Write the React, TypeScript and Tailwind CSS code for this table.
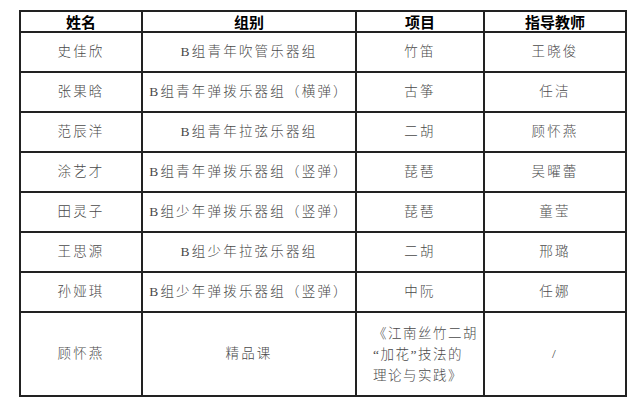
import React from 'react';

type Row = { name: string; group: string; item: React.ReactNode; teacher: string };

const rows: Row[] = [
  { name: '史佳欣', group: 'B组青年吹管乐器组', item: '竹笛', teacher: '王晓俊' },
  { name: '张果晗', group: 'B组青年弹拨乐器组（横弹）', item: '古筝', teacher: '任洁' },
  { name: '范辰洋', group: 'B组青年拉弦乐器组', item: '二胡', teacher: '顾怀燕' },
  { name: '涂艺才', group: 'B组青年弹拨乐器组（竖弹）', item: '琵琶', teacher: '吴曜蕾' },
  { name: '田灵子', group: 'B组少年弹拨乐器组（竖弹）', item: '琵琶', teacher: '童莹' },
  { name: '王思源', group: 'B组少年拉弦乐器组', item: '二胡', teacher: '邢璐' },
  { name: '孙娅琪', group: 'B组少年弹拨乐器组（竖弹）', item: '中阮', teacher: '任娜' },
];

const bodyFont = "font-['Liberation_Serif','Noto_Sans_CJK_SC',serif]";
const headFont = "font-['Noto_Sans_CJK_SC',sans-serif]";

export default function App() {
  return (
    <div className="w-[639px] h-[419px] bg-white pt-[10px] pl-[19px]">
      <table className="table-fixed border-collapse border-2 border-[#222] w-[606px]">
        <colgroup>
          <col className="w-[122px]" />
          <col className="w-[214px]" />
          <col className="w-[128px]" />
          <col className="w-[142px]" />
        </colgroup>
        <thead>
          <tr className="h-[21px]">
            {['姓名', '组别', '项目', '指导教师'].map((h) => (
              <th
                key={h}
                className={`${headFont} border-2 border-[#222] text-[15px] leading-[17px] font-bold text-black text-center p-0`}
              >
                {h}
              </th>
            ))}
          </tr>
        </thead>
        <tbody className={`${bodyFont} text-[#4a4a4a] text-[13.5px] font-light tracking-[2.2px]`}>
          {rows.map((r) => (
            <tr key={r.name} className="h-[40px]">
              <td className="border-2 border-[#222] text-center p-0">{r.name}</td>
              <td className="border-2 border-[#222] text-center p-0 whitespace-nowrap">{r.group}</td>
              <td className="border-2 border-[#222] text-center p-0">{r.item}</td>
              <td className="border-2 border-[#222] text-center p-0">{r.teacher}</td>
            </tr>
          ))}
          <tr className="h-[84px]">
            <td className="border-2 border-[#222] text-center p-0">顾怀燕</td>
            <td className="border-2 border-[#222] text-center p-0">精品课</td>
            <td className="border-2 border-[#222] p-0 pl-[16px] text-left leading-[21px] tracking-[1.5px]">
              《江南丝竹二胡
              <br />
              “加花”技法的
              <br />
              理论与实践》
            </td>
            <td className="border-2 border-[#222] text-center p-0">/</td>
          </tr>
        </tbody>
      </table>
    </div>
  );
}
